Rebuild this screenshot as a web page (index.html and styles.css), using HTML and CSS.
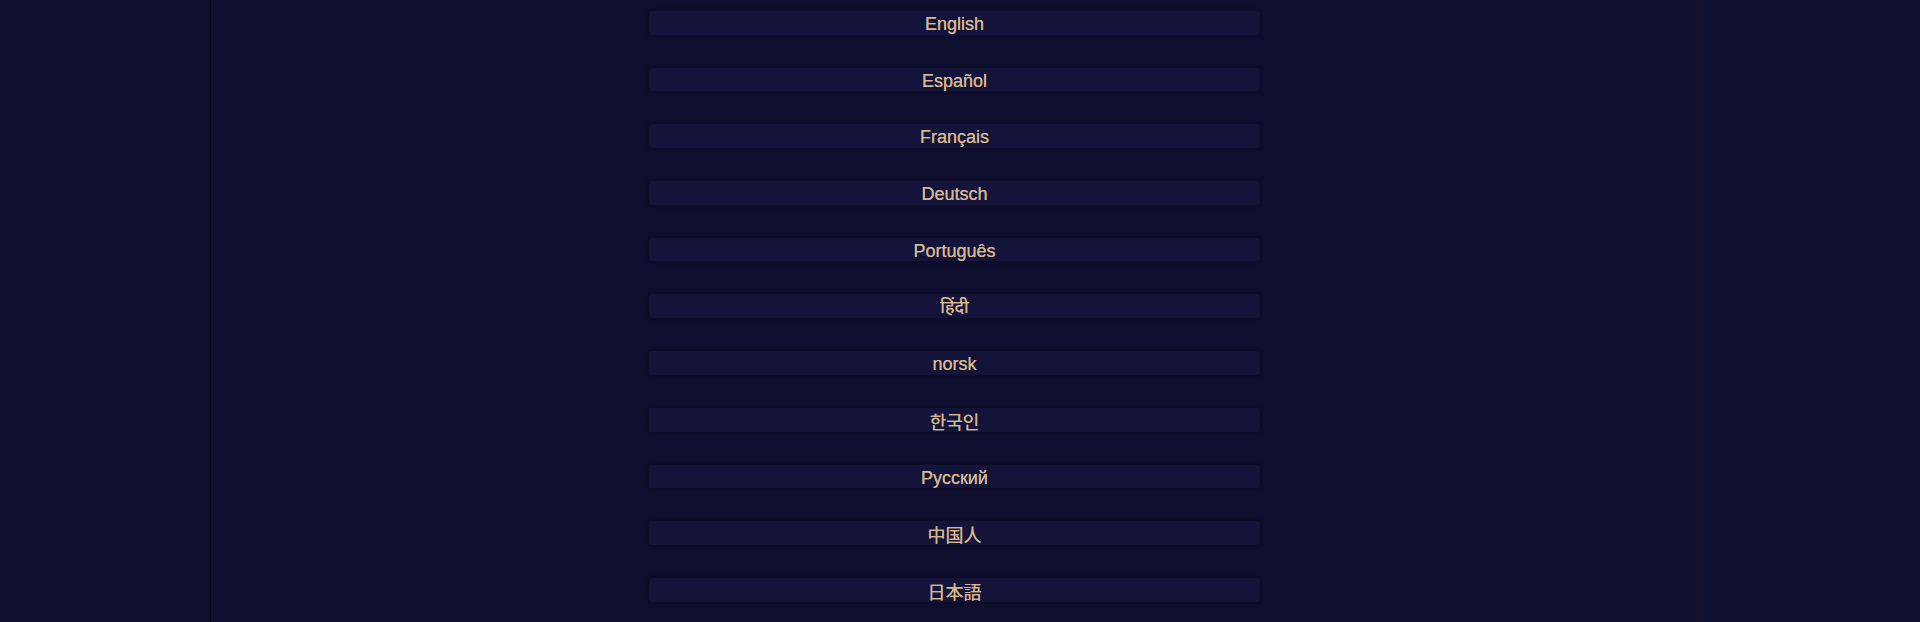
FILE: index.html
```html
<!DOCTYPE html>
<html lang="en">
<head>
  <meta charset="UTF-8">
  <meta name="viewport" content="width=device-width, initial-scale=1.0">
  <title>Language</title>
  <link rel="stylesheet" href="styles.css">
</head>
<body>
  <div class="page">
    <div class="languages">
      <button class="lang" type="button" lang="en">English</button>
      <button class="lang" type="button" lang="es">Español</button>
      <button class="lang" type="button" lang="fr">Français</button>
      <button class="lang" type="button" lang="de">Deutsch</button>
      <button class="lang" type="button" lang="pt">Português</button>
      <button class="lang" type="button" lang="hi">हिंदी</button>
      <button class="lang" type="button" lang="no">norsk</button>
      <button class="lang" type="button" lang="ko">한국인</button>
      <button class="lang" type="button" lang="ru">Русский</button>
      <button class="lang" type="button" lang="zh">中国人</button>
      <button class="lang" type="button" lang="ja">日本語</button>
    </div>
  </div>
</body>
</html>
```

FILE: styles.css
```css
html,
body {
  margin: 0;
  height: 100%;
  background-color: #0f0f2f;
  overflow: hidden;
}

body {
  font-family: "Liberation Sans", Arial, "Noto Sans", "Noto Sans CJK JP", sans-serif;
}

.page {
  margin-left: 210px;
  width: 1487px;
  height: 100%;
  border-left: 1px solid #07071a;
  border-right: 1px solid #1c0d2b;
}

.languages {
  display: flex;
  flex-direction: column;
  align-items: center;
  gap: 33px;
  padding-top: 11px;
}

.lang {
  box-sizing: border-box;
  width: 611px;
  height: 23.7px;
  padding: 1px 0 0;
  border: none;
  border-radius: 3px;
  background-color: #14143a;
  box-shadow: 0 0 4px rgba(0, 0, 0, 0.35);
  color: #d8b88e;
  font-family: inherit;
  font-size: 18px;
  line-height: 24px;
  text-align: center;
  text-shadow: 0 0 0.4px #d8b88e;
  cursor: pointer;
}

.lang:lang(ko) {
  font-family: "Noto Sans CJK KR", sans-serif;
  font-size: 18px;
}

.lang:lang(zh) {
  font-family: "Noto Sans CJK SC", sans-serif;
  font-size: 18px;
}

.lang:lang(ja) {
  font-family: "Noto Sans CJK JP", sans-serif;
  font-size: 18px;
}
```
